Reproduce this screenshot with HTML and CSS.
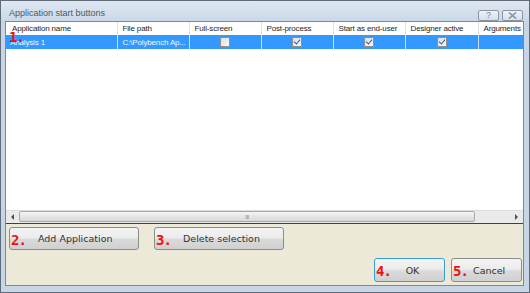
FILE: index.html
```html
<!DOCTYPE html>
<html lang="en">
<head>
    <meta charset="UTF-8">
    <title>Application start buttons</title>
    <link rel="stylesheet" href="styles.css">
</head>
<body>
    <div class="window">
        <div class="titlebar">
            <span class="title">Application start buttons</span>
            <div class="caption-buttons">
                <span class="cap-btn">?</span>
                <span class="cap-btn">
                    <svg width="9" height="7" viewBox="0 0 9 7"><path d="M1 0.5 L8 6.5 M8 0.5 L1 6.5" stroke="#8a929c" stroke-width="1.6"/></svg>
                </span>
            </div>
        </div>
        <div class="client">
            <div class="grid">
                <span class="marker marker-1">1.</span>
                <table class="list">
                    <colgroup>
                        <col style="width:111px"><col style="width:72px"><col style="width:72px">
                        <col style="width:72px"><col style="width:72px"><col style="width:73px"><col>
                    </colgroup>
                    <tr class="head">
                        <th>Application name</th>
                        <th>File path</th>
                        <th>Full-screen</th>
                        <th>Post-process</th>
                        <th>Start as end-user</th>
                        <th>Designer active</th>
                        <th>Arguments</th>
                    </tr>
                    <tr class="selected">
                        <td>Analysis 1</td>
                        <td>C:\Polybench Ap...</td>
                        <td class="c"><span class="check"></span></td>
                        <td class="c"><span class="check on"></span></td>
                        <td class="c"><span class="check on"></span></td>
                        <td class="c"><span class="check on"></span></td>
                        <td></td>
                    </tr>
                </table>
                <div class="filler"></div>
                <div class="hscroll">
                    <span class="arrow left"></span>
                    <div class="track">
                        <div class="thumb"><span class="grip">III</span></div>
                    </div>
                    <span class="arrow right"></span>
                </div>
            </div>
            <div class="row-top">
                <button class="btn wide"><span class="num">2.</span><span class="label">Add Application</span></button>
                <button class="btn wide"><span class="num">3.</span><span class="label">Delete selection</span></button>
            </div>
            <div class="row-bottom">
                <button class="btn small focused"><span class="num">4.</span><span class="label">OK</span></button>
                <button class="btn small"><span class="num">5.</span><span class="label tight">Cancel</span></button>
            </div>
        </div>
    </div>
</body>
</html>
```

FILE: styles.css
```css
body {
    margin: 0;
    width: 530px;
    height: 293px;
    overflow: hidden;
    font-family: "Liberation Sans", Arial, sans-serif;
}
.window {
    box-sizing: border-box;
    width: 530px;
    height: 293px;
    background: #c7d6e6;
    border: 1px solid #5f6b78;
    display: flex;
    flex-direction: column;
    padding: 0 5px 6px 4px;
}
.titlebar {
    height: 20px;
    display: flex;
    align-items: center;
    justify-content: space-between;
    background: linear-gradient(#dfe8f2, #c9d8e8);
    margin: 0 -5px 0 -4px;
    padding: 0 6px 0 8px;
}
.title {
    font-size: 9px;
    color: #4e5a66;
    padding-top: 3px;
}
.caption-buttons {
    display: flex;
    gap: 3px;
    padding-top: 8px;
}
.cap-btn {
    box-sizing: border-box;
    width: 21px;
    height: 11px;
    border: 1px solid #8a96a3;
    border-radius: 2px;
    background: linear-gradient(#eef3f8, #d4dfea);
    font-size: 9px;
    line-height: 9px;
    color: #7a838d;
    text-align: center;
    display: flex;
    align-items: center;
    justify-content: center;
}
.client {
    flex: 1;
    background: #ece9d8;
    border: 1px solid #7d8894;
    display: flex;
    flex-direction: column;
}
.grid {
    position: relative;
    height: 201px;
    background: #fff;
    border-bottom: 1px solid #404040;
    display: flex;
    flex-direction: column;
    overflow: hidden;
}
.marker {
    color: #f01010;
    font-family: "DejaVu Sans Mono", monospace;
    font-weight: bold;
    font-size: 14px;
    letter-spacing: -1px;
}
.marker-1 {
    position: absolute;
    left: 3px;
    top: 7px;
}
.list {
    border-collapse: collapse;
    table-layout: fixed;
    width: 590px;
    font-size: 8px;
    letter-spacing: -0.15px;
}
.list th, .list td {
    height: 14px;
    padding: 0 0 0 5px;
    white-space: nowrap;
    overflow: hidden;
    text-align: left;
    font-weight: normal;
}
.head th {
    color: #1e1e1e;
    border-right: 1px solid #dde2e8;
    height: 13px;
}
.head th:first-child {
    padding-left: 6px;
}
.selected td {
    background: #3399ff;
    color: #f2f8ff;
    border-right: 1px solid #c8e1fb;
}
.selected td:first-child {
    padding-left: 4px;
}
.list td.c {
    text-align: center;
    padding: 0;
}
.check {
    display: inline-block;
    box-sizing: border-box;
    width: 10px;
    height: 10px;
    border: 1px solid #8f8f8f;
    background: linear-gradient(135deg, #dcdcdc, #fafafa);
    vertical-align: middle;
    position: relative;
}
.check.on::after {
    content: "";
    position: absolute;
    left: 2px;
    top: 0px;
    width: 3px;
    height: 5px;
    border: solid #3d5d9e;
    border-width: 0 1.5px 1.5px 0;
    transform: rotate(40deg);
}
.filler {
    flex: 1;
}
.hscroll {
    height: 12px;
    display: flex;
    align-items: center;
    background: #eaeaea;
    border-top: 1px solid #dcdcdc;
}
.arrow {
    width: 0;
    height: 0;
    border-top: 3px solid transparent;
    border-bottom: 3px solid transparent;
    margin: 0 5px;
}
.arrow.left {
    border-right: 3px solid #505050;
}
.arrow.right {
    border-left: 3px solid #505050;
}
.track {
    flex: 1;
    height: 12px;
    display: flex;
    padding-right: 35px;
}
.thumb {
    flex: 1;
    box-sizing: border-box;
    height: 11px;
    border: 1px solid #a8a8a8;
    border-radius: 2px;
    background: linear-gradient(#f4f4f4, #d8d8d8);
    display: flex;
    align-items: center;
    justify-content: center;
}
.grip {
    font-size: 6px;
    color: #8a8a8a;
    letter-spacing: -0.5px;
}
.row-top {
    display: flex;
    gap: 15px;
    padding: 3px 0 0 3px;
}
.row-bottom {
    display: flex;
    justify-content: flex-end;
    gap: 6px;
    padding: 8px 1px 0 0;
}
.btn {
    box-sizing: border-box;
    height: 23px;
    border: 1px solid #8c8c8c;
    border-radius: 3px;
    background: linear-gradient(#f3f3f3 0%, #ececec 45%, #dadada 55%, #d0d0d0 100%);
    display: flex;
    align-items: center;
    padding: 0 0 0 1px;
    font-family: "DejaVu Sans", sans-serif;
    font-size: 9.5px;
    color: #333;
}
.btn .num {
    color: #f01010;
    font-family: "DejaVu Sans Mono", monospace;
    font-weight: bold;
    font-size: 14px;
    letter-spacing: -1px;
    width: 22px;
    text-align: left;
    padding-top: 2px;
}
.btn.wide {
    width: 130px;
}
.btn.wide .label {
    padding-left: 5px;
}
.btn.small {
    width: 71px;
    height: 24px;
}
.btn.small .label {
    flex: 1;
    text-align: center;
    padding-right: 17px;
}
.btn.small .label.tight {
    text-align: left;
    padding: 0;
    margin-left: -2px;
}
.btn.focused {
    border-color: #3c9dd0;
}
```
